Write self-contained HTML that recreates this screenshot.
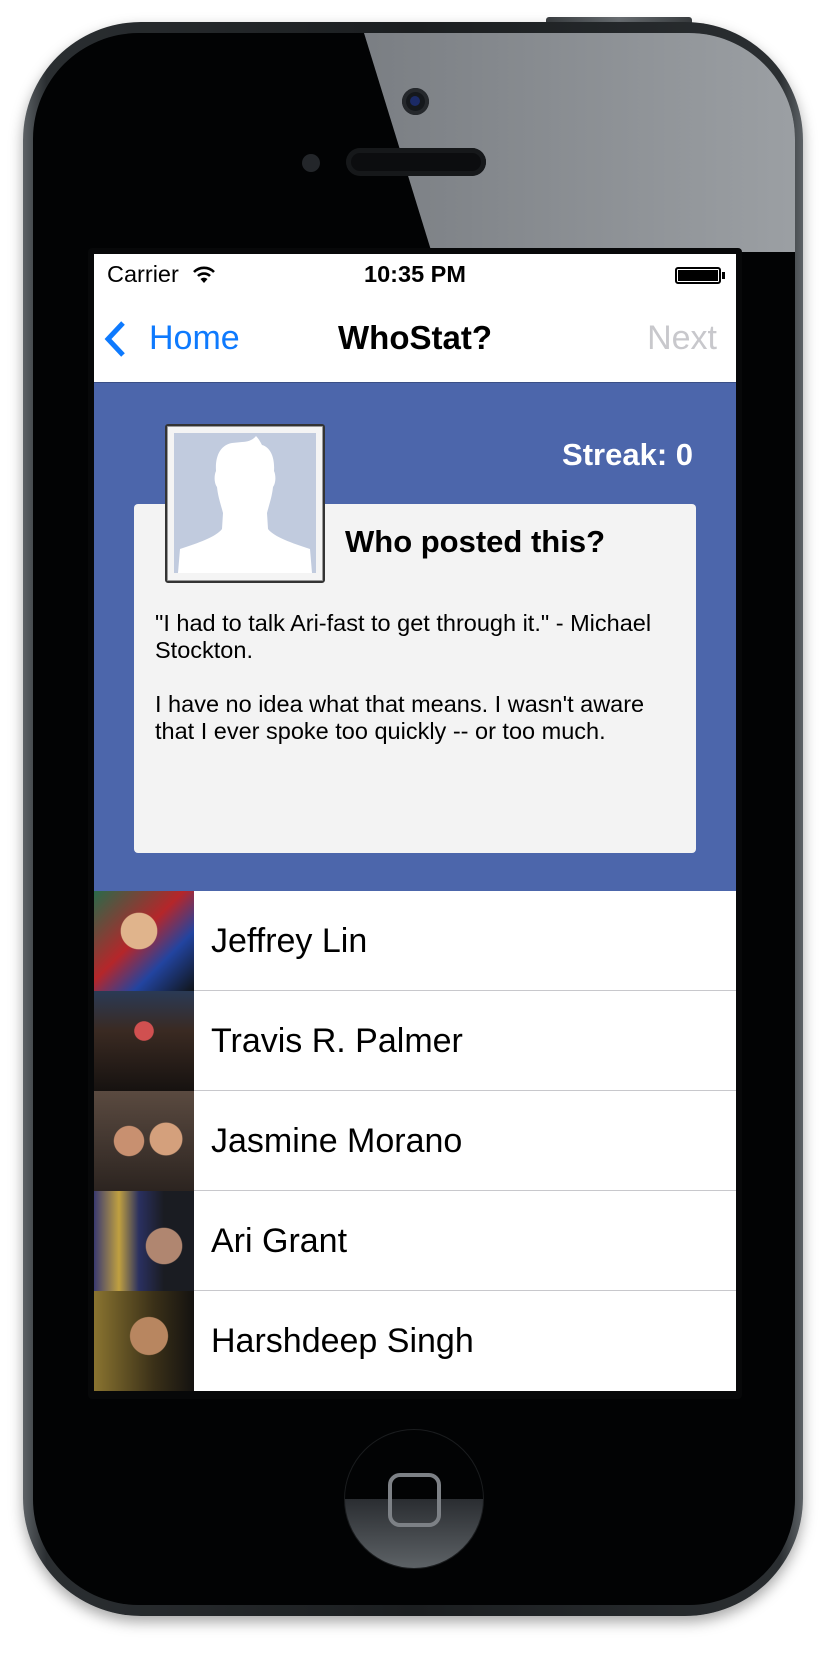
<!DOCTYPE html>
<html><head><style>
*{margin:0;padding:0;box-sizing:border-box}
body{width:828px;height:1668px;background:#fff;position:relative;overflow:hidden;font-family:"Liberation Sans",Arial,sans-serif}
.abs{position:absolute}
.phone{left:23px;top:22px;width:780px;height:1594px;border-radius:118px;background:linear-gradient(90deg,#5d6266,#2a2e31 3%,#1b1e20 50%,#2a2e31 97%,#5d6266);box-shadow:0 6px 14px rgba(0,0,0,.35)}
.inner{left:33px;top:33px;width:762px;height:1566px;border-radius:106px;background:#020304;overflow:hidden}
.screen{left:94px;top:254px;width:642px;height:1137px;background:#fff;overflow:hidden}
.btn{background:linear-gradient(90deg,#3a3e41,#6b7074,#3a3e41);border-radius:3px}
.row{position:absolute;left:0;width:642px;height:100px;border-bottom:1px solid #c8c8cc;background:#fff}
.row .ph{position:absolute;left:0;top:0;width:100px;height:100px}
.row .nm{position:absolute;left:117px;top:0;line-height:100px;font-size:34px;color:#000}
</style></head><body>
<div class="abs btn" style="left:546px;top:17px;width:146px;height:8px;border-radius:3px 3px 0 0"></div>
<div class="abs btn" style="left:27px;top:245px;width:9px;height:70px"></div>
<div class="abs btn" style="left:27px;top:395px;width:9px;height:53px"></div>
<div class="abs btn" style="left:27px;top:528px;width:9px;height:54px"></div>
<div class="abs phone"></div>
<div class="abs inner" style="left:33px;top:33px;width:762px;height:1572px"></div>
<svg class="abs" style="left:0;top:0" width="828" height="252">
<defs><linearGradient id="g" x1="0" y1="0" x2="1" y2="0"><stop offset="0" stop-color="#7a7e83"/><stop offset="1" stop-color="#9ea2a6"/></linearGradient>
<clipPath id="c"><rect x="33" y="33" width="762" height="400" rx="106"/></clipPath></defs>
<polygon clip-path="url(#c)" points="360,20 828,20 828,260 434,260" fill="url(#g)"/>
</svg>
<div class="abs" style="left:402px;top:88px;width:27px;height:27px;border-radius:50%;background:#15181c;box-shadow:inset 0 0 0 4px #25282c"></div>
<div class="abs" style="left:410px;top:96px;width:10px;height:10px;border-radius:50%;background:#1b2a66"></div>
<div class="abs" style="left:302px;top:154px;width:18px;height:18px;border-radius:50%;background:#23262a"></div>
<div class="abs" style="left:346px;top:148px;width:140px;height:28px;border-radius:14px;background:#0c0d0f;box-shadow:inset 0 0 0 5px #16181a"></div>
<div class="abs" style="left:88px;top:248px;width:654px;height:1151px;background:#070809;border-radius:4px"></div>
<div class="abs screen">
 <div class="abs" style="left:13px;top:6px;font-size:23.5px;line-height:28px">Carrier</div>
 <svg class="abs" style="left:98px;top:12px" width="24" height="18" viewBox="0 0 24 18"><path d="M2 6 A14 14 0 0 1 22 6" stroke="#000" stroke-width="2.6" fill="none"/><path d="M6 10 A8.5 8.5 0 0 1 18 10" stroke="#000" stroke-width="2.6" fill="none"/><path d="M12 17 L8.5 13 A5 5 0 0 1 15.5 13 Z" fill="#000"/></svg>
 <div class="abs" style="left:0;width:642px;text-align:center;top:6px;font-size:23.5px;font-weight:bold;line-height:28px">10:35 PM</div>
 <div class="abs" style="left:581px;top:13px;width:46px;height:17px;border:2px solid #000;border-radius:3px;padding:1px"><div style="background:#000;width:100%;height:100%"></div></div>
 <div class="abs" style="left:628px;top:18px;width:3px;height:7px;background:#000"></div>
 <svg class="abs" style="left:9px;top:66px" width="26" height="40" viewBox="0 0 26 40"><path d="M20 3 L5 19 L20 35" stroke="#0e7afe" stroke-width="5" fill="none"/></svg>
 <div class="abs" style="left:55px;top:64px;font-size:34px;line-height:40px;color:#0e7afe">Home</div>
 <div class="abs" style="left:0;width:642px;text-align:center;top:64px;font-size:33px;line-height:40px;font-weight:bold">WhoStat?</div>
 <div class="abs" style="right:19px;top:64px;font-size:34px;line-height:40px;color:#c8c8cc">Next</div>
 <div class="abs" style="left:0;top:128px;width:642px;height:509px;background:#4c66ab;border-top:1px solid #3a4f86"></div>
 <div class="abs" style="right:43px;top:184px;font-size:31px;font-weight:bold;color:#fff;line-height:34px">Streak: 0</div>
 <div class="abs" style="left:40px;top:250px;width:562px;height:349px;background:#f3f3f3;border-radius:4px"></div>
 <div class="abs" style="left:71px;top:170px;width:160px;height:159px;background:#f4f4f4;border:2px solid #333;border-radius:3px;box-shadow:0 0 0 1px #999 inset">
  <div class="abs" style="left:7px;top:7px;width:142px;height:140px;background:#c1cbde;overflow:hidden">
   <svg width="142" height="140" viewBox="0 0 142 140"><path d="M58 10 C47 12 41 22 42 38 C40 42 40 50 43 54 C44 64 47 72 49 80 L48 96 C42 104 24 110 6 116 L4 140 L138 140 L136 116 C118 110 100 104 94 96 L93 80 C95 72 98 64 99 54 C102 50 102 42 100 38 C101 24 96 14 88 12 C86 8 84 5 82 3 C79 7 74 9 68 9 Z" fill="#fff"/></svg>
  </div>
 </div>
 <div class="abs" style="left:251px;top:270px;font-size:31px;font-weight:bold;line-height:36px">Who posted this?</div>
 <div class="abs" style="left:61px;top:356px;width:520px;font-size:23.5px;line-height:27px;color:#000">"I had to talk Ari-fast to get through it." - Michael Stockton.<br><br style="line-height:28px">I have no idea what that means. I wasn't aware that I ever spoke too quickly -- or too much.</div>
 <div class="row" style="top:637px"><div class="ph" style="background:radial-gradient(circle at 45% 40%,#e0b48c 0 22%,transparent 23%),linear-gradient(135deg,#2a6a4a,#b5262a 45%,#2244a0 70%,#101418)"></div><div class="nm">Jeffrey Lin</div></div>
 <div class="row" style="top:737px"><div class="ph" style="background:radial-gradient(circle at 50% 40%,#d05050 0 12%,transparent 13%),linear-gradient(180deg,#2a3a55,#3a2a22 40%,#161210)"></div><div class="nm">Travis R. Palmer</div></div>
 <div class="row" style="top:837px"><div class="ph" style="background:radial-gradient(circle at 35% 50%,#c89070 0 18%,transparent 19%),radial-gradient(circle at 72% 48%,#d4a07c 0 18%,transparent 19%),linear-gradient(180deg,#5a4a40,#2c2420)"></div><div class="nm">Jasmine Morano</div></div>
 <div class="row" style="top:937px"><div class="ph" style="background:radial-gradient(circle at 70% 55%,#b08670 0 20%,transparent 21%),linear-gradient(90deg,#3a3a70,#c0a040 25%,#2a3060 45%,#1a1c22 70%)"></div><div class="nm">Ari Grant</div></div>
 <div class="row" style="top:1037px;border-bottom:none"><div class="ph" style="background:radial-gradient(ellipse at 55% 45%,#b88660 0 24%,transparent 25%),linear-gradient(90deg,#8a7430,#3a3018 60%,#141210)"></div><div class="nm">Harshdeep Singh</div></div>
</div>
<div class="abs" style="left:344px;top:1429px;width:140px;height:140px;border-radius:50%;overflow:hidden;background:linear-gradient(180deg,#020304 0 50%,#2a2d31 50%,#5d6266);border:1px solid #1a1c1e"></div>
<div class="abs" style="left:388px;top:1473px;width:53px;height:54px;border:4px solid #7d8186;border-radius:12px"></div>
</body></html>
